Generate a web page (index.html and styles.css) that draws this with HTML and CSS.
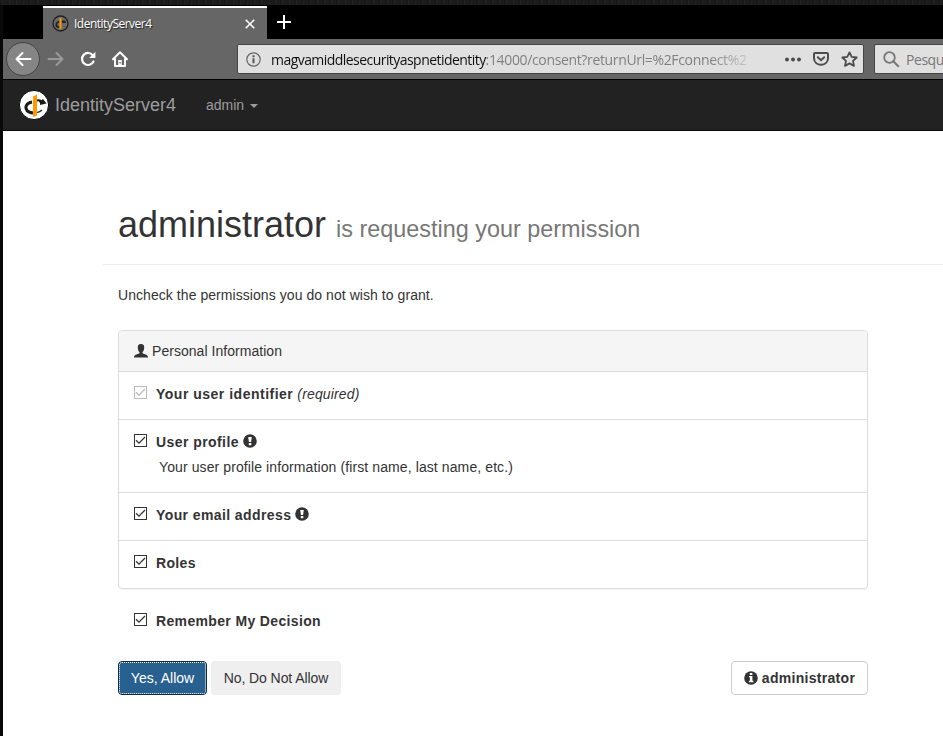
FILE: index.html
```html
<!DOCTYPE html>
<html lang="en">
<head>
<meta charset="utf-8">
<title>IdentityServer4</title>
<link rel="stylesheet" href="styles.css">
</head>
<body>
<svg class="defs" width="0" height="0">
  <defs>
    <symbol id="check" viewBox="0 0 13 13"><rect x=".5" y=".5" width="12" height="12" fill="#fff" stroke="currentColor"/><path d="M2 6.300 5 9.200l6-6.200" fill="none" stroke="currentColor" stroke-width="1.300"/></symbol>
    <symbol id="alert" viewBox="0 0 14 14"><circle cx="7" cy="7" r="6.800" fill="#333"/><path d="M5.200 3h3.600l-.7 5H5.900zM5.800 9h2.500v2.200H5.800z" fill="#fff"/></symbol>
    <symbol id="info" viewBox="0 0 14 14"><circle cx="7" cy="7" r="6.800" fill="#333"/><path d="M5.800 2h2.600v2H5.800zM5 5h3.400v4.800h1v1.400H4.900V9.800h1V6.300H5z" fill="#fff"/></symbol>
    <symbol id="logo" viewBox="0 0 30 30"><circle cx="15" cy="15" r="14.600" fill="#fff" stroke="#080808" stroke-width="1"/><path d="M13 12C7.500 13 5.500 17 8 20.500c1.500 1.800 3.500 2.300 6 2.500" fill="none" stroke="#1a1a1a" stroke-width="3"/><path d="M18 10.500q3-.8 5 1" fill="none" stroke="#1a1a1a" stroke-width="2"/><path d="M18 22.500q3-.5 5-2.500" fill="none" stroke="#1a1a1a" stroke-width="1.200"/><path d="M19 10l3 .5 2-1.500 3.500 4.500-6.500 1.500v-2z" fill="#1a1a1a"/><path d="M14 6.500l4-2v21l-4 1.500z" fill="#f90"/></symbol>
  </defs>
</svg>
<div class="window">
  <div class="tabs">
    <div class="tab">
      <svg class="favicon" width="17" height="17" viewBox="0 0 17 17"><circle cx="8.500" cy="8.500" r="7.500" fill="#6b6b6b" stroke="#222" stroke-width="1.300"/><path d="M7.500 6.500C3 7.500 3.500 12 7.500 12.500" fill="none" stroke="#222" stroke-width="1.700"/><path d="M9.500 5.500l4 .3.500 2-3.500.5zM10 12.300q2-.3 2.500-1.500v1z" fill="#222"/><path d="M7.500 3.500 9.500 2.500v11l-2 1z" fill="#f90"/></svg>
      <span class="tab-title">IdentityServer4</span>
      <svg class="close" width="10" height="10" viewBox="0 0 10 10"><path d="M.7.7l8.600 8.600M9.300.7.7 9.300" stroke="#fff" stroke-width="1.600"/></svg>
    </div>
    <svg class="plus" width="14" height="14" viewBox="0 0 14 14"><path d="M7 0v14M0 7h14" stroke="#fff" stroke-width="2"/></svg>
  </div>
  <div class="toolbar">
    <div class="back"><svg width="18" height="16" viewBox="0 0 18 16"><path d="M8.500 2 2.500 8l6 6M2.500 8h14" fill="none" stroke="#fff" stroke-width="2" stroke-linecap="round" stroke-linejoin="round"/></svg></div>
    <svg class="forward" width="18" height="16" viewBox="0 0 18 16"><path d="M9.500 2l6 6-6 6M15.500 8h-14" fill="none" stroke="#9a9a9a" stroke-width="2" stroke-linecap="round" stroke-linejoin="round"/></svg>
    <svg class="reload" width="16" height="16" viewBox="0 0 16 16"><path d="M12.800 4.300A6 6 0 1 0 13.500 10.500" fill="none" stroke="#fff" stroke-width="2.200" stroke-linecap="round"/><path d="M15.400.8v6.200H9.200z" fill="#fff"/></svg>
    <svg class="home" width="16" height="16" viewBox="0 0 16 16"><path d="M1 8.200 8 1.300l7 6.900M3 8v7h10V8" fill="none" stroke="#fff" stroke-width="2" stroke-linecap="round" stroke-linejoin="round"/><path d="M6.200 9h3.600v6H6.200z" fill="#fff"/><path d="M7.500 11h1.300v1.500H7.500z" fill="#666"/></svg>
    <div class="address">
      <svg class="site-info" width="15" height="15" viewBox="0 0 15 15"><circle cx="7.500" cy="7.500" r="6.700" fill="none" stroke="#666" stroke-width="1.200"/><path d="M6.500 3.300h2v2h-2zM6.500 6.300h2v5h-2z" fill="#555"/></svg>
      <div class="url"><span class="host">magvamiddlesecurityaspnetidentity</span><span class="path">:14000/consent?returnUrl=%2Fconnect%2</span></div>
      <svg class="dots" width="16" height="5" viewBox="0 0 16 5"><g fill="#4c4c4c"><circle cx="2" cy="2.500" r="2"/><circle cx="8" cy="2.500" r="2"/><circle cx="14" cy="2.500" r="2"/></g></svg>
      <svg class="pocket" width="16" height="14" viewBox="0 0 16 14"><path d="M2 1h12q1 0 1 1v4c0 9-14 9-14 0V2q0-1 1-1z" fill="none" stroke="#4c4c4c" stroke-width="2"/><path d="M4.800 5.200 8 8.300l3.200-3.100" fill="none" stroke="#4c4c4c" stroke-width="1.900" stroke-linecap="round"/></svg>
      <svg class="star" width="17" height="17" viewBox="0 0 17 17"><path d="M8.500 1.400l2.200 4.500 5 .6-3.700 3.400 1 5-4.500-2.500L4 14.900l1-5L1.300 6.500l5-.6z" fill="none" stroke="#4c4c4c" stroke-width="1.800" stroke-linejoin="round"/></svg>
    </div>
    <div class="search">
      <svg width="17" height="17" viewBox="0 0 17 17"><circle cx="6.500" cy="6.500" r="5.300" fill="none" stroke="#777" stroke-width="1.800"/><path d="M10.300 10.300l5.500 5.500" stroke="#777" stroke-width="2"/></svg>
      <span class="search-text">Pesqui</span>
    </div>
  </div>
  <nav class="navbar">
    <svg class="logo" width="30" height="30"><use href="#logo"/></svg>
    <span class="brand">IdentityServer4</span>
    <span class="user">admin</span><span class="caret"></span>
  </nav>
  <main class="page">
    <header class="heading"><h1><span class="client">administrator</span><small>is requesting your permission</small></h1></header>
    <p class="intro">Uncheck the permissions you do not wish to grant.</p>
    <section class="panel">
      <div class="panel-head"><svg class="person" width="14" height="14" viewBox="0 0 14 14"><path d="M7 0C4.600 0 3.600 1.500 3.800 4c.1 2 .8 3.300 1.700 4.100v1.100L1.200 11Q0 11.600 0 13.500h14q0-1.900-1.200-2.500L8.500 9.200V8.100c.9-.8 1.600-2.100 1.700-4.100C10.400 1.500 9.400 0 7 0z" fill="#333"/></svg><span class="panel-title">Personal Information</span></div>
      <div class="item"><svg class="box disabled" width="13" height="13"><use href="#check"/></svg><b class="w-id">Your user identifier</b><em>(required)</em></div>
      <div class="item tall"><svg class="box" width="13" height="13"><use href="#check"/></svg><b class="w-profile">User profile</b><svg class="mark" width="14" height="14"><use href="#alert"/></svg><div class="description">Your user profile information (first name, last name, etc.)</div></div>
      <div class="item"><svg class="box" width="13" height="13"><use href="#check"/></svg><b class="w-email">Your email address</b><svg class="mark" width="14" height="14"><use href="#alert"/></svg></div>
      <div class="item"><svg class="box" width="13" height="13"><use href="#check"/></svg><b>Roles</b></div>
    </section>
    <div class="remember"><svg class="box" width="13" height="13"><use href="#check"/></svg><b>Remember My Decision</b></div>
    <div class="actions">
      <button class="btn primary">Yes, Allow</button>
      <button class="btn plain">No, Do Not Allow</button>
      <button class="btn outline"><svg width="14" height="14"><use href="#info"/></svg><b>administrator</b></button>
    </div>
  </main>
</div>
</body>
</html>
```
FILE: styles.css
```css
* { box-sizing: border-box; }
body {
  margin: 0;
  height: 736px;
  overflow: hidden;
  padding: 5px 0 0 3px;
  background: repeating-linear-gradient(90deg, #191919 0 2px, #222 2px 3px, #1c1c1c 3px 7px) top / 100% 5px no-repeat, #090909;
  font: 14px/20px "Liberation Sans", Arial, sans-serif;
  color: #333;
}
.defs { position: absolute; }
svg { display: block; flex: none; }
span, b, em { white-space: nowrap; }
.window { height: 731px; background: #fff; overflow: hidden; }

.tabs { height: 34px; background: #000; display: flex; padding: 1px 0 0 40px; }
.tab {
  width: 224px;
  height: 33px;
  border-top: 2px solid #fff;
  background: #666;
  display: flex;
  align-items: center;
  padding: 0 12px 0 9px;
}
.tab-title {
  width: 100px;
  margin-left: 5px;
  font: 12px/16px "Open Sans", sans-serif;
  letter-spacing: -.5px;
  color: #fff;
  text-shadow: 1px 1px 1px #222;
}
.close { margin-left: auto; }
.plus { margin: 9px 0 0 10px; }

.toolbar {
  height: 41px;
  background: #666;
  border-bottom: 1px solid #000;
  display: flex;
  align-items: center;
  padding-left: 3px;
}
.back {
  flex: none;
  width: 34px;
  height: 34px;
  border-radius: 50%;
  background: #858585;
  border: 1px solid #444;
  display: grid;
  place-items: center;
}
.forward { margin-left: 7px; }
.reload { margin-left: 15px; }
.home { margin-left: 16px; }
.address, .search {
  height: 30px;
  background: #e0e0e0;
  border: 1px solid #444;
  display: flex;
  align-items: center;
}
.address { width: 627px; margin-left: 109px; padding-left: 8px; border-radius: 2px; flex: none; }
.url {
  flex: none;
  width: 482px;
  margin: 2px 0 0 10px;
  white-space: nowrap;
  font: 14px/20px "Open Sans", sans-serif;
  -webkit-mask-image: linear-gradient(90deg, #000 440px, transparent 488px);
  mask-image: linear-gradient(90deg, #000 440px, transparent 488px);
}
.host { color: #111; letter-spacing: -.55px; }
.path { color: #808080; letter-spacing: -.35px; }
.dots { margin-left: 32px; }
.pocket { margin-left: 12px; }
.star { margin-left: 12px; }
.search { width: 130px; flex: none; margin-left: 10px; padding-left: 8px; border-radius: 2px 0 0 2px; }
.search-text { margin: 2px 0 0 6px; font: 14px/20px "Open Sans", sans-serif; letter-spacing: -.45px; color: #777; }

.navbar {
  height: 51px;
  background: #222;
  border-bottom: 1px solid #080808;
  display: flex;
  align-items: center;
  padding-left: 16px;
  color: #9d9d9d;
}
.brand { width: 121px; margin-left: 6px; font-size: 18px; }
.user { width: 39px; margin-left: 30px; }
.caret { margin: 2px 0 0 5px; border: 4px solid transparent; border-top-color: #9d9d9d; border-bottom: 0; }

.page { width: 750px; margin-left: 115px; padding-top: 74px; }
.heading { width: 840px; height: 60px; margin-left: -15px; padding-left: 15px; border-bottom: 1px solid #eee; }
h1 { margin: 0; font-size: 36px; line-height: 40px; font-weight: 400; white-space: nowrap; }
h1 small { margin-left: 10px; font-size: 23.4px; color: #777; }
.intro { margin: 20px 0 25px; letter-spacing: .06px; }

.panel { border: 1px solid #ddd; border-radius: 4px; box-shadow: 0 1px 1px rgba(0, 0, 0, .05); }
.panel-head { height: 40px; padding-left: 15px; display: flex; align-items: center; background: #f5f5f5; border-radius: 3px 3px 0 0; }
.panel-title { margin-left: 4px; letter-spacing: .04px; }
.item { height: 48px; border-top: 1px solid #ddd; padding: 12px 0 0 15px; display: flex; flex-wrap: wrap; align-content: flex-start; }
.tall { height: 73px; }
.item b, .remember b, .outline b { letter-spacing: .35px; }
.item .w-id { letter-spacing: .5px; }
.item .w-profile { letter-spacing: .43px; }
.item .w-email { letter-spacing: .4px; }
.box { margin: 2px 9px 0 0; color: #333; }
.disabled { color: #bbb; }
.item em { margin-left: 4px; letter-spacing: .15px; }
.mark { margin: 2px 0 0 4px; }
.description { width: 100%; margin: 5px 0 0 25px; letter-spacing: .1px; }
.remember { display: flex; margin: 22px 0 30px 16px; }

.actions { display: flex; }
.btn { height: 34px; padding: 0; border-radius: 4px; font: 14px/20px "Liberation Sans", Arial, sans-serif; color: #333; }
.primary { width: 89px; color: #fff; background: #286090; border: 1px solid #122b40; outline: 1px dotted #fff; outline-offset: -2px; }
.plain { width: 130px; margin-left: 4px; background: #efefef; border: 0; letter-spacing: -.08px; }
.outline { width: 137px; margin-left: auto; background: #fff; border: 1px solid #ccc; display: flex; align-items: center; justify-content: center; gap: 4px; }
.outline b { letter-spacing: .3px; }
```
